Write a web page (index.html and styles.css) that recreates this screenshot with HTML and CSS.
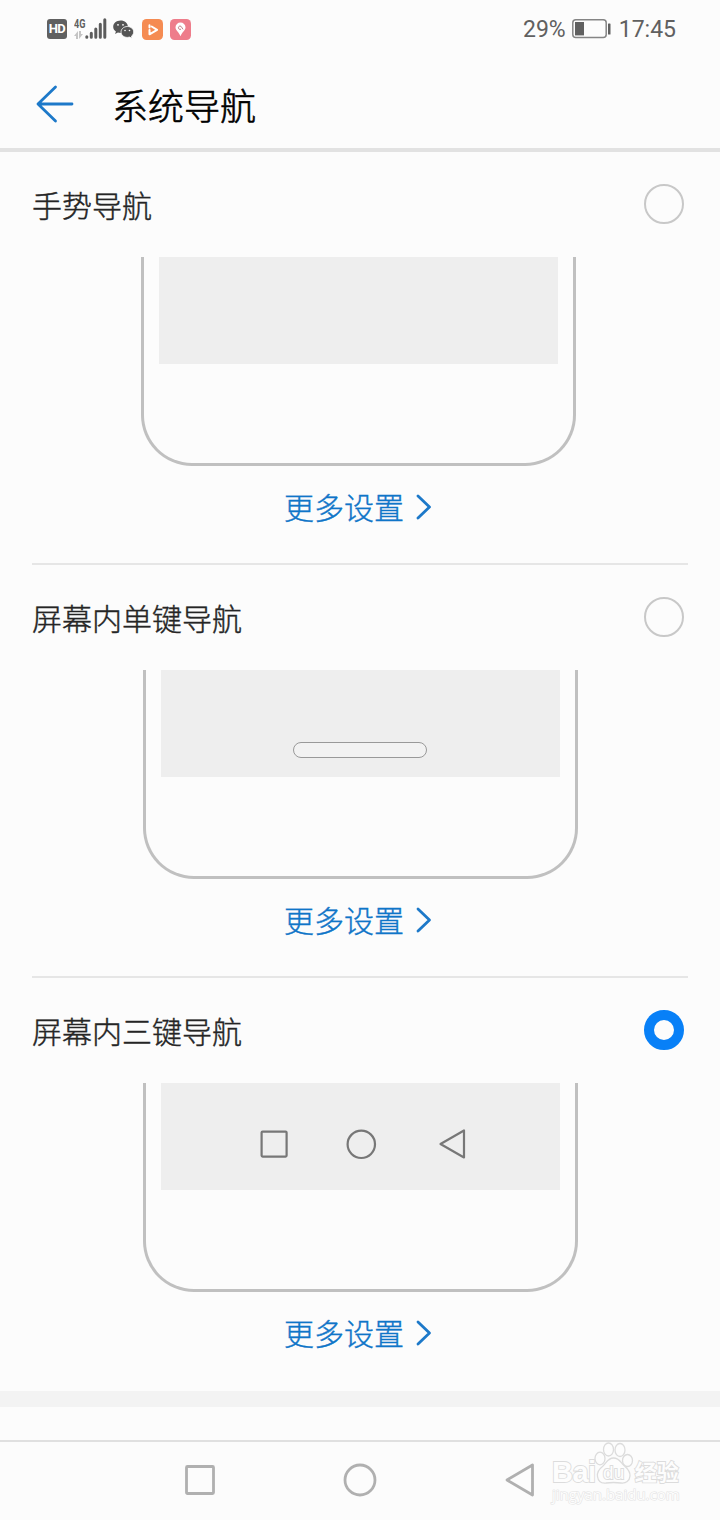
FILE: index.html
```html
<!DOCTYPE html>
<html lang="zh-CN">
<head>
    <meta charset="UTF-8">
    <meta name="viewport" content="width=device-width, initial-scale=1.0">
    <title>系统导航</title>
    <link rel="stylesheet" href="styles.css">
</head>
<body>
    <div class="status-bar">
        <div class="status-left">
            <span class="hd">HD</span>
            <div class="signal">
                <div class="network">
                    <span class="network-type">4G</span>
                    <svg class="network-arrows" width="9" height="8" viewBox="0 0 9 8">
                        <path d="M4 8V0L0 5H2V8ZM5 0V8L9 3H7V0Z" fill="#c4c4c4"/>
                    </svg>
                </div>
                <svg width="22" height="21" viewBox="0 0 22 21" stroke="#5c5c5c" stroke-width="3" stroke-linecap="round">
                    <path d="M1.8 18.8v.4M6.3 15.3v3.9M10.8 11v8.2M15.3 6.3v12.9M19.8 1.8v17.4"/>
                </svg>
            </div>
            <svg class="wechat" width="21" height="19" viewBox="0 0 21 19">
                <path d="M7.6.4C3.4.4.2 3.2.2 6.7c0 2 1 3.7 2.7 4.8l-.8 2.4 2.8-1.4c.9.3 1.7.4 2.9.4 3.9 0 7.1-2.8 7.1-6.3S11.7.4 7.6.4Z" fill="#555"/>
                <path d="M14.3 6.5c3.5 0 6.4 2.4 6.4 5.5 0 1.6-.9 3.1-2.2 4.1l.5 2.2-2.4-1.2c-.7.2-1.5.3-2.3.3-3.5 0-6.3-2.4-6.3-5.4s2.8-5.500 6.3-5.500Z" fill="#555" stroke="#fcfcfc" stroke-width=".8"/>
                <g fill="#fcfcfc"><circle cx="5" cy="4.8" r=".9"/><circle cx="10" cy="4.8" r=".9"/><circle cx="12" cy="10.5" r=".8"/><circle cx="16.5" cy="10.5" r=".8"/></g>
            </svg>
            <svg class="app-video" width="21" height="21" viewBox="0 0 21 21">
                <rect width="21" height="21" rx="4.5" fill="#f58b52"/>
                <path d="M7.5 6.3v2.2M7.5 11v4.3l7.6-4.5-5.4-3.3" fill="none" stroke="#fff" stroke-width="2" stroke-linejoin="round" stroke-linecap="round"/>
            </svg>
            <svg class="app-map" width="21" height="21" viewBox="0 0 21 21">
                <rect width="21" height="21" rx="4.5" fill="#ee7d8b"/>
                <path d="M10.5 3.5a5 5 0 0 1 5 5c0 3-3.8 4.8-5 8.8-1.2-4-5-5.8-5-8.8a5 5 0 0 1 5-5Z" fill="#fff"/>
                <path d="M11 10.2A1.7 1.7 0 1 1 11 7.3L13 10.3" fill="none" stroke="#b9757d" stroke-width=".9"/>
            </svg>
        </div>
        <div class="status-right">
            <span>29%</span>
            <svg class="battery" width="39" height="20" viewBox="0 0 39 20">
                <rect x=".8" y=".8" width="33.4" height="17.8" rx="3" fill="none" stroke="#858585" stroke-width="1.5"/>
                <rect x="3" y="3" width="9" height="13.4" fill="#606060"/>
                <rect x="36" y="4.5" width="2.5" height="11" rx=".6" fill="#606060"/>
            </svg>
            <span>17:45</span>
        </div>
    </div>

    <header class="header">
        <svg width="38" height="38" viewBox="0 0 38 38" fill="none" stroke="#1d79c9" stroke-width="2.8" stroke-linecap="round" stroke-linejoin="round">
            <path d="M19.5 2 2 19 19.5 36M2 19H36"/>
        </svg>
        <h1>系统导航</h1>
    </header>

    <main class="options">
        <section class="option">
            <div class="option-head">
                <h2>手势导航</h2>
                <span class="radio"></span>
            </div>
            <div class="phone phone-gesture">
                <div class="screen"></div>
            </div>
            <a class="more"><span>更多设置</span>
                <svg width="16" height="26" viewBox="0 0 16 26"><path d="M2 2 13.5 13 2 24"/></svg>
            </a>
        </section>

        <section class="option">
            <div class="option-head">
                <h2>屏幕内单键导航</h2>
                <span class="radio"></span>
            </div>
            <div class="phone">
                <div class="screen screen-single">
                    <span class="pill"></span>
                </div>
            </div>
            <a class="more"><span>更多设置</span>
                <svg width="16" height="26" viewBox="0 0 16 26"><path d="M2 2 13.5 13 2 24"/></svg>
            </a>
        </section>

        <section class="option">
            <div class="option-head">
                <h2>屏幕内三键导航</h2>
                <span class="radio radio-checked"></span>
            </div>
            <div class="phone">
                <div class="screen screen-three">
                    <svg width="206" height="32" viewBox="0 0 206 32" fill="none" stroke="#777" stroke-width="2.2" stroke-linejoin="round">
                        <rect x="1.6" y="3.6" width="25" height="25" rx="1"/>
                        <circle cx="101.3" cy="16.3" r="13.7"/>
                        <path d="M204 2.5V29.5L180.5 16Z"/>
                    </svg>
                </div>
            </div>
            <a class="more"><span>更多设置</span>
                <svg width="16" height="26" viewBox="0 0 16 26"><path d="M2 2 13.5 13 2 24"/></svg>
            </a>
        </section>
    </main>
    <div class="section-gap"></div>

    <nav class="nav-bar">
        <svg width="350" height="36" viewBox="0 0 350 36" fill="none" stroke="#b0b0b0" stroke-width="2.8" stroke-linejoin="round">
            <rect x="1.5" y="4.5" width="27" height="27" rx="1"/>
            <circle cx="175" cy="18" r="15"/>
            <path d="M347.5 3V33L322 18Z"/>
        </svg>
        <div class="watermark">
            <div class="watermark-logo">
                <span class="brand">Bai</span>
                <span class="paw">
                    <svg width="40" height="44" viewBox="0 0 40 44" fill="#fdfdfd" stroke="#dcdcdc" stroke-width="1.3">
                        <ellipse cx="6" cy="17.5" rx="5" ry="6.3"/>
                        <ellipse cx="14.5" cy="8.5" rx="5" ry="6.5"/>
                        <ellipse cx="26" cy="9" rx="5" ry="6.5"/>
                        <ellipse cx="33.5" cy="19.5" rx="5" ry="6"/>
                        <path d="M19.5 17c-6 0-7 5-11 8.5-4 3-5.5 6.5-5 10 .7 5 4 7 8.5 6.5 5-.7 10-.7 15 0 5 .6 8.5-2 9-7 .3-3.5-1.5-6.5-5-9.5C26.5 22 26 17 19.5 17Z"/>
                    </svg>
                    <span class="du">du</span>
                </span>
                <span class="brand-cn">经验</span>
            </div>
            <div class="watermark-url">jingyan.baidu.com</div>
        </div>
    </nav>
</body>
</html>
```
FILE: styles.css
```css
* {
    margin: 0;
    padding: 0;
    box-sizing: border-box;
}

body {
    font-family: 'Noto Sans CJK SC', sans-serif;
    font-weight: 300;
    background: #fcfcfc;
    color: #252525;
    height: 1520px;
    display: flex;
    flex-direction: column;
    overflow: hidden;
}

svg {
    display: block;
    flex: none;
}

/* Status bar */
.status-bar {
    height: 60px;
    padding: 0 44px 2px 47px;
    display: flex;
    align-items: center;
    justify-content: space-between;
    font-family: Roboto, sans-serif;
    font-weight: 400;
    color: #606060;
}

.status-left,
.status-right {
    display: flex;
    align-items: center;
}

.status-right {
    font-size: 23px;
    line-height: 28px;
}

.status-right span {
    padding-top: 2px;
}

.battery {
    margin: 0 8px 0 6px;
}

.hd {
    width: 20px;
    height: 20px;
    border-radius: 3px;
    background: #606060;
    color: #fff;
    font-size: 13px;
    font-weight: 700;
    line-height: 20px;
    text-align: center;
    letter-spacing: -0.5px;
}

.signal {
    display: flex;
    align-items: flex-end;
    margin: 0 6px 2px 7px;
}

.network {
    display: flex;
    flex-direction: column;
    width: 11px;
}

.network-type {
    font-size: 13px;
    font-weight: 700;
    line-height: 12px;
    white-space: nowrap;
    transform: scaleX(0.7);
    transform-origin: left;
}

.network-arrows {
    margin-top: 1px;
}

.app-video {
    margin: 0 7px 0 8px;
}

/* Title bar */
.header {
    height: 92px;
    padding: 0 36px;
    border-bottom: 4px solid #e2e2e2;
    display: flex;
    align-items: center;
    gap: 38px;
}

.header h1 {
    font-size: 36px;
    font-weight: 300;
    line-height: 52px;
    color: #000;
    -webkit-text-stroke: 0.6px currentColor;
}

/* Options */
.options {
    flex: none;
}

.option {
    height: 413px;
    padding: 0 32px;
    display: flex;
    flex-direction: column;
    align-items: center;
}

.option:not(:last-child)::after {
    content: "";
    width: 656px;
    height: 2px;
    margin-top: auto;
    background: #e6e6e6;
}

.option-head {
    width: 100%;
    height: 105px;
    padding: 0 4px 2px 0;
    display: flex;
    align-items: center;
    justify-content: space-between;
}

.option-head h2 {
    font-size: 30px;
    font-weight: 300;
    line-height: 44px;
    -webkit-text-stroke: 0.4px currentColor;
}

.radio {
    width: 40px;
    height: 40px;
    border: 2px solid #c8c8c8;
    border-radius: 50%;
}

.radio-checked {
    border: 10px solid #0880f7;
}

.phone {
    width: 435px;
    height: 209px;
    border: 3px solid #c0c0c0;
    border-top: none;
    border-radius: 0 0 51px 51px;
    display: flex;
    justify-content: center;
}

.phone-gesture {
    margin-right: 3px;
}

.screen {
    width: 399px;
    height: 107px;
    background: #eee;
    display: flex;
    justify-content: center;
}

.screen-single {
    align-items: flex-end;
    padding-bottom: 19px;
}

.pill {
    width: 134px;
    height: 16px;
    border: 1px solid #999;
    border-radius: 8px;
    background: #f2f2f2;
}

.screen-three {
    align-items: center;
    padding: 15px 0 0 6px;
}

.more {
    height: 82px;
    padding-right: 4px;
    display: flex;
    align-items: center;
    gap: 12px;
    font-size: 30px;
    line-height: 44px;
    color: #0f75c8;
    -webkit-text-stroke: 0.4px currentColor;
}

.more span {
    padding-bottom: 2px;
}

.more svg {
    fill: none;
    stroke: #1d79c9;
    stroke-width: 2.8;
    stroke-linecap: round;
    stroke-linejoin: round;
}

.section-gap {
    height: 16px;
    background: #f3f3f3;
}

/* Bottom navigation */
.nav-bar {
    position: relative;
    height: 80px;
    margin-top: auto;
    padding: 0 0 2px 185px;
    border-top: 2px solid #e0e0e0;
    display: flex;
    align-items: center;
}

/* Watermark lies over the bar */
.watermark {
    position: absolute;
    left: 552px;
    top: -1px;
    width: 130px;
    color: #fdfdfd;
    font-family: 'Liberation Sans', sans-serif;
    -webkit-text-stroke: 1.8px #dcdcdc;
    paint-order: stroke fill;
}

.watermark-logo {
    height: 44px;
    display: flex;
    align-items: flex-end;
}

.brand {
    margin-bottom: 2px;
    font-size: 29px;
    font-weight: 700;
    line-height: 22px;
    letter-spacing: -0.5px;
}

.paw {
    display: grid;
    margin: 0 1px 0 -2px;
}

.paw > * {
    grid-area: 1 / 1;
}

.paw svg {
    paint-order: normal;
}

.du {
    align-self: end;
    justify-self: center;
    margin-bottom: 1px;
    font-size: 19px;
    line-height: 22px;
}

.brand-cn {
    margin-bottom: 2px;
    font-family: 'Noto Sans CJK SC', sans-serif;
    font-size: 22px;
    font-weight: 700;
    line-height: 26px;
}

.watermark-url {
    margin-top: 1px;
    font-family: 'Open Sans', sans-serif;
    font-weight: 400;
    font-size: 15px;
    line-height: 16px;
    -webkit-text-stroke: 1.2px #e4e4e4;
}
```
